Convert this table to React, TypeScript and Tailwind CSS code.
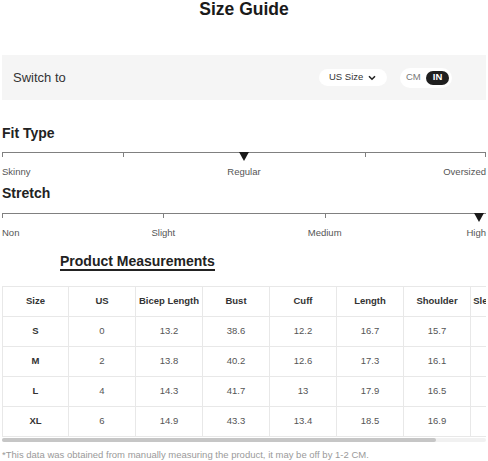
import React from "react";

const headers = ["Size", "US", "Bicep Length", "Bust", "Cuff", "Length", "Shoulder", "Sleeve Length"];
const rows = [
  ["S", "0", "13.2", "38.6", "12.2", "16.7", "15.7", "23.2"],
  ["M", "2", "13.8", "40.2", "12.6", "17.3", "16.1", "23.6"],
  ["L", "4", "14.3", "41.7", "13", "17.9", "16.5", "24"],
  ["XL", "6", "14.9", "43.3", "13.4", "18.5", "16.9", "24.4"],
];

function Marker() {
  return (
    <svg width="10" height="9" viewBox="0 0 10 9" className="block">
      <path d="M0 0 L10 0 L5 9 Z" fill="#1a1a1a" />
    </svg>
  );
}

export default function App() {
  return (
    <div
      className="w-[488px] px-[2px] bg-white text-[#222]"
      style={{ fontFamily: '"Liberation Sans", Arial, sans-serif' }}
    >
      <h1 className="text-center text-[17.5px] leading-[18px] font-bold h-[18px] text-[#1a1a1a]">Size Guide</h1>

      <div className="mt-[37px] h-[45px] bg-[#f5f5f5] flex items-center pl-[11px] pr-[34px]">
        <span className="text-[13px] text-[#333]">Switch to</span>
        <div className="ml-auto flex items-center">
          <div className="h-[17px] w-[68px] rounded-full bg-white flex items-center pl-[10px] text-[9.5px] text-[#333]">
            <span>US Size</span>
            <svg width="8" height="6" viewBox="0 0 8 6" className="ml-[5px]">
              <path d="M1 1.2 L4 4.2 L7 1.2" fill="none" stroke="#222" strokeWidth="1.6" />
            </svg>
          </div>
          <div className="ml-[13px] h-[20px] w-[52px] rounded-full bg-white flex items-center pl-[6px] pr-[3px]">
            <span className="text-[9.5px] text-[#777]">CM</span>
            <span className="ml-auto h-[14px] w-[23px] rounded-full bg-[#1f1f1f] text-white text-[9.5px] font-bold flex items-center justify-center">IN</span>
          </div>
        </div>
      </div>

      <h2 className="mt-[23px] text-[14px] leading-[20px] font-bold text-[#222]">Fit Type</h2>
      <div className="mt-[9px] relative h-px bg-[#808080]">
        <div className="absolute left-0 top-0 h-[5px] w-px bg-[#808080]" />
        <div className="absolute left-[25%] top-0 h-[5px] w-px bg-[#808080]" />
        <div className="absolute left-[75%] top-0 h-[5px] w-px bg-[#808080]" />
        <div className="absolute right-0 top-0 h-[5px] w-px bg-[#808080]" />
        <div className="absolute left-1/2 -translate-x-1/2 top-0">
          <Marker />
        </div>
      </div>
      <div className="mt-[13px] grid grid-cols-4 text-[9.5px] leading-[12px] text-[#555]">
        <span className="text-left">Skinny</span>
        <span className="col-span-2 text-center">Regular</span>
        <span className="text-right">Oversized</span>
      </div>

      <h2 className="mt-[5px] text-[14px] leading-[20px] font-bold text-[#222]">Stretch</h2>
      <div className="mt-[10px] relative h-px bg-[#808080]">
        <div className="absolute left-0 top-0 h-[5px] w-px bg-[#808080]" />
        <div className="absolute left-[33.333%] top-0 h-[5px] w-px bg-[#808080]" />
        <div className="absolute left-[66.667%] top-0 h-[5px] w-px bg-[#808080]" />
        <div className="absolute right-[2px] top-0">
          <Marker />
        </div>
      </div>
      <div className="mt-[13px] grid grid-cols-6 text-[9.5px] leading-[12px] text-[#555]">
        <span className="text-left">Non</span>
        <span className="col-span-2 text-center">Slight</span>
        <span className="col-span-2 text-center">Medium</span>
        <span className="text-right">High</span>
      </div>

      <div className="mt-[14px] ml-[58px] inline-block text-[14px] leading-[16px] font-bold text-[#222] border-b-2 border-[#222]">
        Product Measurements
      </div>

      <div className="mt-[13px] w-[484px] overflow-hidden">
        <table className="table-fixed border-collapse w-[538px]">
          <colgroup>
            <col className="w-[66px]" />
            <col className="w-[67px]" />
            <col className="w-[67px]" />
            <col className="w-[67px]" />
            <col className="w-[67px]" />
            <col className="w-[67px]" />
            <col className="w-[67px]" />
            <col className="w-[70px]" />
          </colgroup>
          <thead>
            <tr className="h-[30px]">
              {headers.map((h) => (
                <th key={h} className="border border-[#e8e8e8] text-[9.5px] font-bold text-[#333] text-center whitespace-nowrap p-0">
                  {h}
                </th>
              ))}
            </tr>
          </thead>
          <tbody>
            {rows.map((r) => (
              <tr key={r[0]} className="h-[30px]">
                {r.map((c, i) => (
                  <td
                    key={i}
                    className={
                      i === 0
                        ? "border border-[#e8e8e8] text-[9.5px] font-bold text-[#333] text-center p-0"
                        : "border border-[#e8e8e8] text-[9.5px] text-[#555] text-center p-0"
                    }
                  >
                    {c}
                  </td>
                ))}
              </tr>
            ))}
          </tbody>
        </table>
      </div>
      <div className="mt-[1px] h-[4px] w-[484px] rounded-full bg-[#f1f1f1]">
        <div className="h-[4px] w-[434px] rounded-full bg-[#c6c6c6]" />
      </div>

      <p className="mt-[7px] text-[9.5px] leading-[12px] text-[#9a9a9a]">
        *This data was obtained from manually measuring the product, it may be off by 1-2 CM.
      </p>
    </div>
  );
}
